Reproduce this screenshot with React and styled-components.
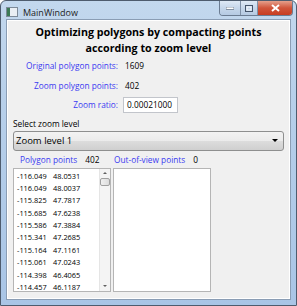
import React from "react";
import styled, { createGlobalStyle } from "styled-components";

const Global = createGlobalStyle`
  html, body {
    margin: 0;
    padding: 0;
    background: #ffffff;
  }
  body {
    font-family: "Open Sans", "Noto Sans", sans-serif;
  }
`;

const Window = styled.div`
  width: 297px;
  height: 306px;
  box-sizing: border-box;
  border: 1px solid #4e5c6e;
  border-radius: 6px 6px 0 0;
  background: linear-gradient(180deg, #c3d8ee 0%, #b8d0ea 30%, #a9c5e6 100%);
  display: flex;
  flex-direction: column;
  overflow: hidden;
`;

const TitleBar = styled.div`
  height: 18px;
  display: flex;
  align-items: flex-start;
  padding-left: 5px;
  flex-shrink: 0;
`;

const AppIcon = styled.div`
  width: 10px;
  height: 8px;
  margin-top: 6px;
  border: 1px solid #7d8a99;
  background: linear-gradient(90deg, #3c7a56 0 35%, #e9eef4 35% 100%);
`;

const Title = styled.div`
  font-size: 9px;
  color: #1e1e1e;
  margin-left: 5px;
  margin-top: 5px;
  flex: 1;
`;

const Caption = styled.div`
  display: flex;
  margin-right: 3px;
  height: 14px;
  border: 1px solid #6b7c92;
  border-top: none;
  border-radius: 0 0 4px 4px;
  overflow: hidden;
`;

const CapButton = styled.div`
  width: ${p => p.$w}px;
  height: 100%;
  display: flex;
  align-items: center;
  justify-content: center;
  background: ${p =>
    p.$close
      ? "linear-gradient(180deg, #e5a08c 0%, #d0553b 50%, #c73d22 100%)"
      : "linear-gradient(180deg, #dfe9f5 0%, #c6d7ea 50%, #b5cae3 100%)"};
  & + & {
    border-left: 1px solid #7f91a8;
  }
`;

const Client = styled.div`
  flex: 1;
  margin: 0 5px 5px 5px;
  border: 1px solid #8a9db4;
  background: #f0f0f0;
  display: flex;
  flex-direction: column;
  box-shadow: inset 0 0 0 1px #ffffff;
`;

const Heading = styled.div`
  font-weight: 700;
  font-size: 10.7px;
  line-height: 16px;
  text-align: center;
  color: #000;
  margin-top: 4px;
`;

const Stats = styled.div`
  display: grid;
  grid-template-columns: 111px auto;
  column-gap: 7px;
  margin-top: 0;
  align-items: center;
`;

const Label = styled.div`
  text-align: right;
  color: #3a3af0;
  font-size: 8.3px;
  height: 19.5px;
  line-height: 19.5px;
`;

const Value = styled.div`
  font-size: 8.3px;
  color: #000;
`;

const TextBox = styled.div`
  width: 50px;
  height: 14px;
  margin-left: -2px;
  background: #fff;
  border: 1px solid #c2c5cb;
  font-size: 8.3px;
  line-height: 14px;
  padding-left: 3px;
`;

const SmallLabel = styled.div`
  font-size: 8.3px;
  margin: 3px 0 0 6px;
  color: #000;
`;

const Combo = styled.div`
  margin: 2px 6px 0 6px;
  height: 18px;
  border: 1px solid #8e8f8f;
  border-radius: 3px;
  background: linear-gradient(180deg, #f3f3f3 0%, #ebebeb 50%, #dddddd 50%, #cfcfcf 100%);
  display: flex;
  align-items: center;
  justify-content: space-between;
  padding: 0 5px 0 2px;
  font-size: 9.5px;
  color: #000;
`;

const Arrow = styled.div`
  width: 0;
  height: 0;
  border-left: 3px solid transparent;
  border-right: 3px solid transparent;
  border-top: 3px solid #000;
`;

const Lists = styled.div`
  display: grid;
  grid-template-columns: 98px 98px;
  column-gap: 2px;
  margin: 0 0 0 6px;
`;

const ListHead = styled.div`
  display: flex;
  gap: 8px;
  font-size: 8.3px;
  height: 17px;
  align-items: center;
  padding-left: ${p => p.$pad}px;
`;

const HeadLabel = styled.span`
  color: #3a3af0;
`;

const ListBox = styled.div`
  height: 122px;
  background: #fff;
  border: 1px solid #b5b5b5;
  display: flex;
  overflow: hidden;
`;

const Rows = styled.div`
  flex: 1;
  padding: 1px 0 0 3px;
`;

const Row = styled.div`
  display: flex;
  font-size: 7.4px;
  height: 12.4px;
  line-height: 12.4px;
  color: #000;
  span:first-child {
    width: 36px;
  }
`;

const ScrollBar = styled.div`
  width: 10px;
  border-left: 1px solid #e5e5e5;
  background: #f4f4f4;
  display: flex;
  flex-direction: column;
  align-items: center;
  padding-top: 3px;
`;

const ScrollArrow = styled.div`
  width: 0;
  height: 0;
  border-left: 2px solid transparent;
  border-right: 2px solid transparent;
  ${p => (p.$down ? "border-top: 2px solid #606060;" : "border-bottom: 2px solid #606060;")}
  margin-top: ${p => (p.$down ? "auto" : "0")};
  margin-bottom: ${p => (p.$down ? "4px" : "0")};
`;

const Thumb = styled.div`
  width: 8px;
  height: 6px;
  margin-top: 4px;
  border: 1px solid #a0a0a0;
  border-radius: 2px;
  background: linear-gradient(90deg, #f0f0f0, #dcdcdc);
`;

const points = [
  ["-116.049", "48.0531"],
  ["-116.049", "48.0037"],
  ["-115.825", "47.7817"],
  ["-115.685", "47.6238"],
  ["-115.586", "47.3884"],
  ["-115.341", "47.2685"],
  ["-115.164", "47.1161"],
  ["-115.061", "47.0243"],
  ["-114.398", "46.4065"],
  ["-114.457", "46.1187"]
];

export default function App() {
  return (
    <>
      <Global />
      <Window>
        <TitleBar>
          <AppIcon />
          <Title>MainWindow</Title>
          <Caption>
            <CapButton $w={20}>
              <svg width="8" height="3"><rect x="0" y="0" width="8" height="2.5" fill="#fff" stroke="#44546a" strokeWidth="0.6" /></svg>
            </CapButton>
            <CapButton $w={16}>
              <svg width="8" height="7"><rect x="0.5" y="0.5" width="7" height="6" fill="none" stroke="#44546a" strokeWidth="1" /><rect x="2" y="2" width="4" height="3" fill="none" stroke="#fff" strokeWidth="0.8" /></svg>
            </CapButton>
            <CapButton $w={34} $close>
              <svg width="9" height="8"><path d="M1 1 L8 7 M8 1 L1 7" stroke="#fff" strokeWidth="2" /></svg>
            </CapButton>
          </Caption>
        </TitleBar>
        <Client>
          <Heading>
            Optimizing polygons by compacting points
            <br />
            according to zoom level
          </Heading>
          <Stats>
            <Label>Original polygon points:</Label>
            <Value>1609</Value>
            <Label>Zoom polygon points:</Label>
            <Value>402</Value>
            <Label>Zoom ratio:</Label>
            <TextBox>0.00021000</TextBox>
          </Stats>
          <SmallLabel>Select zoom level</SmallLabel>
          <Combo>
            <span>Zoom level 1</span>
            <Arrow />
          </Combo>
          <Lists>
            <ListHead $pad={7}>
              <HeadLabel>Polygon points</HeadLabel>
              <span>402</span>
            </ListHead>
            <ListHead $pad={1}>
              <HeadLabel>Out-of-view points</HeadLabel>
              <span>0</span>
            </ListHead>
            <ListBox>
              <Rows>
                {points.map(([a, b]) => (
                  <Row key={a + b}>
                    <span>{a}</span>
                    <span>{b}</span>
                  </Row>
                ))}
              </Rows>
              <ScrollBar>
                <ScrollArrow />
                <Thumb />
                <ScrollArrow $down />
              </ScrollBar>
            </ListBox>
            <ListBox />
          </Lists>
        </Client>
      </Window>
    </>
  );
}
